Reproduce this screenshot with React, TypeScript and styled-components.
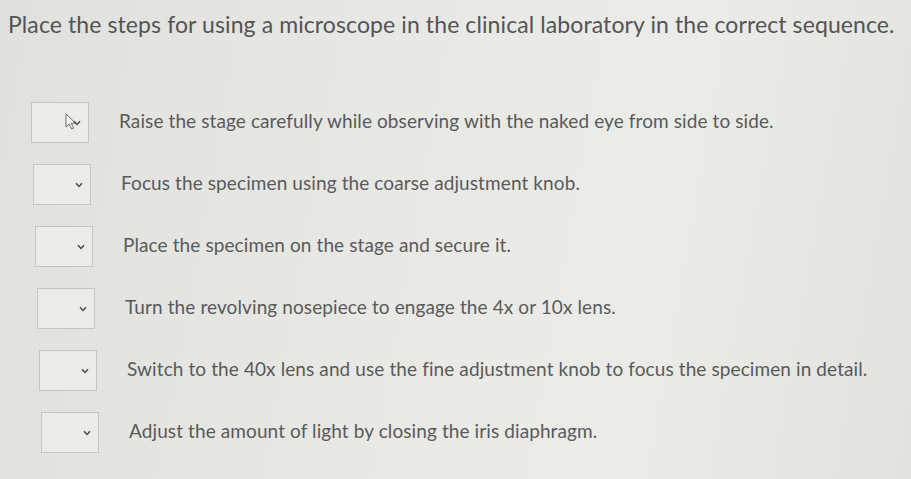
import React from 'react';
import styled, { createGlobalStyle } from 'styled-components';

const GlobalStyle = createGlobalStyle`
  html, body {
    margin: 0;
    padding: 0;
    background: #e4e4e0;
  }
  body {
    font-family: Lato, "Open Sans", sans-serif;
    color: #575757;
  }
`;

const Page = styled.div`
  width: 911px;
  height: 479px;
  overflow: hidden;
  background: linear-gradient(100deg, #e0e0dc 0%, #e8e8e5 45%, #ebebe8 70%, #e2e2de 100%);
  box-sizing: border-box;
  padding: 8px 0 0 8px;
`;

const Question = styled.h1`
  margin: 0;
  font-size: 23px;
  letter-spacing: 0.1px;
  font-weight: 400;
  line-height: 32px;
  color: #545454;
  white-space: nowrap;
`;

const StepList = styled.ol`
  list-style: none;
  margin: 0;
  padding: 62px 0 0 23px;
  display: flex;
  flex-direction: column;
  gap: 21px;
`;

const StepRow = styled.li<{ $indent: number }>`
  display: flex;
  align-items: center;
  gap: 30px;
  height: 41px;
  padding-left: ${(p) => p.$indent}px;
`;

const OrderSelect = styled.div`
  position: relative;
  width: 58px;
  height: 41px;
  box-sizing: border-box;
  border: 1px solid #c4c4c1;
  background: #ebebe8;
  flex-shrink: 0;
`;

const Chevron = styled.svg`
  position: absolute;
  right: 7px;
  top: 17px;
  width: 8px;
  height: 6px;
`;

const Pointer = styled.svg`
  position: absolute;
  left: 33px;
  top: 10px;
  width: 12px;
  height: 17px;
`;

const StepText = styled.span`
  font-size: 19px;
  letter-spacing: 0.1px;
  line-height: 24px;
  margin-top: -3px;
  color: #5a5a5a;
  white-space: nowrap;
`;

const steps = [
  'Raise the stage carefully while observing with the naked eye from side to side.',
  'Focus the specimen using the coarse adjustment knob.',
  'Place the specimen on the stage and secure it.',
  'Turn the revolving nosepiece to engage the 4x or 10x lens.',
  'Switch to the 40x lens and use the fine adjustment knob to focus the specimen in detail.',
  'Adjust the amount of light by closing the iris diaphragm.',
];

const App = () => {
  return (
    <Page>
      <GlobalStyle />
      <Question>
        Place the steps for using a microscope in the clinical laboratory in the correct sequence.
      </Question>
      <StepList>
        {steps.map((step, index) => (
          <StepRow key={index} $indent={Math.round(index * 1.9)}>
            <OrderSelect>
              {index === 0 && (
                <Pointer viewBox="0 0 12 17">
                  <path
                    d="M1 1 L1 14 L4.2 11 L6.6 16 L8.6 15.1 L6.3 10.2 L10.6 10.2 Z"
                    fill="#f6f6f4"
                    stroke="#6a6a6a"
                    strokeWidth="1"
                    strokeLinejoin="round"
                  />
                </Pointer>
              )}
              <Chevron viewBox="0 0 8 6">
                <path d="M1 1.2 L4 4.4 L7 1.2" fill="none" stroke="#4a4a4a" strokeWidth="1.5" />
              </Chevron>
            </OrderSelect>
            <StepText>{step}</StepText>
          </StepRow>
        ))}
      </StepList>
    </Page>
  );
};

export default App;
